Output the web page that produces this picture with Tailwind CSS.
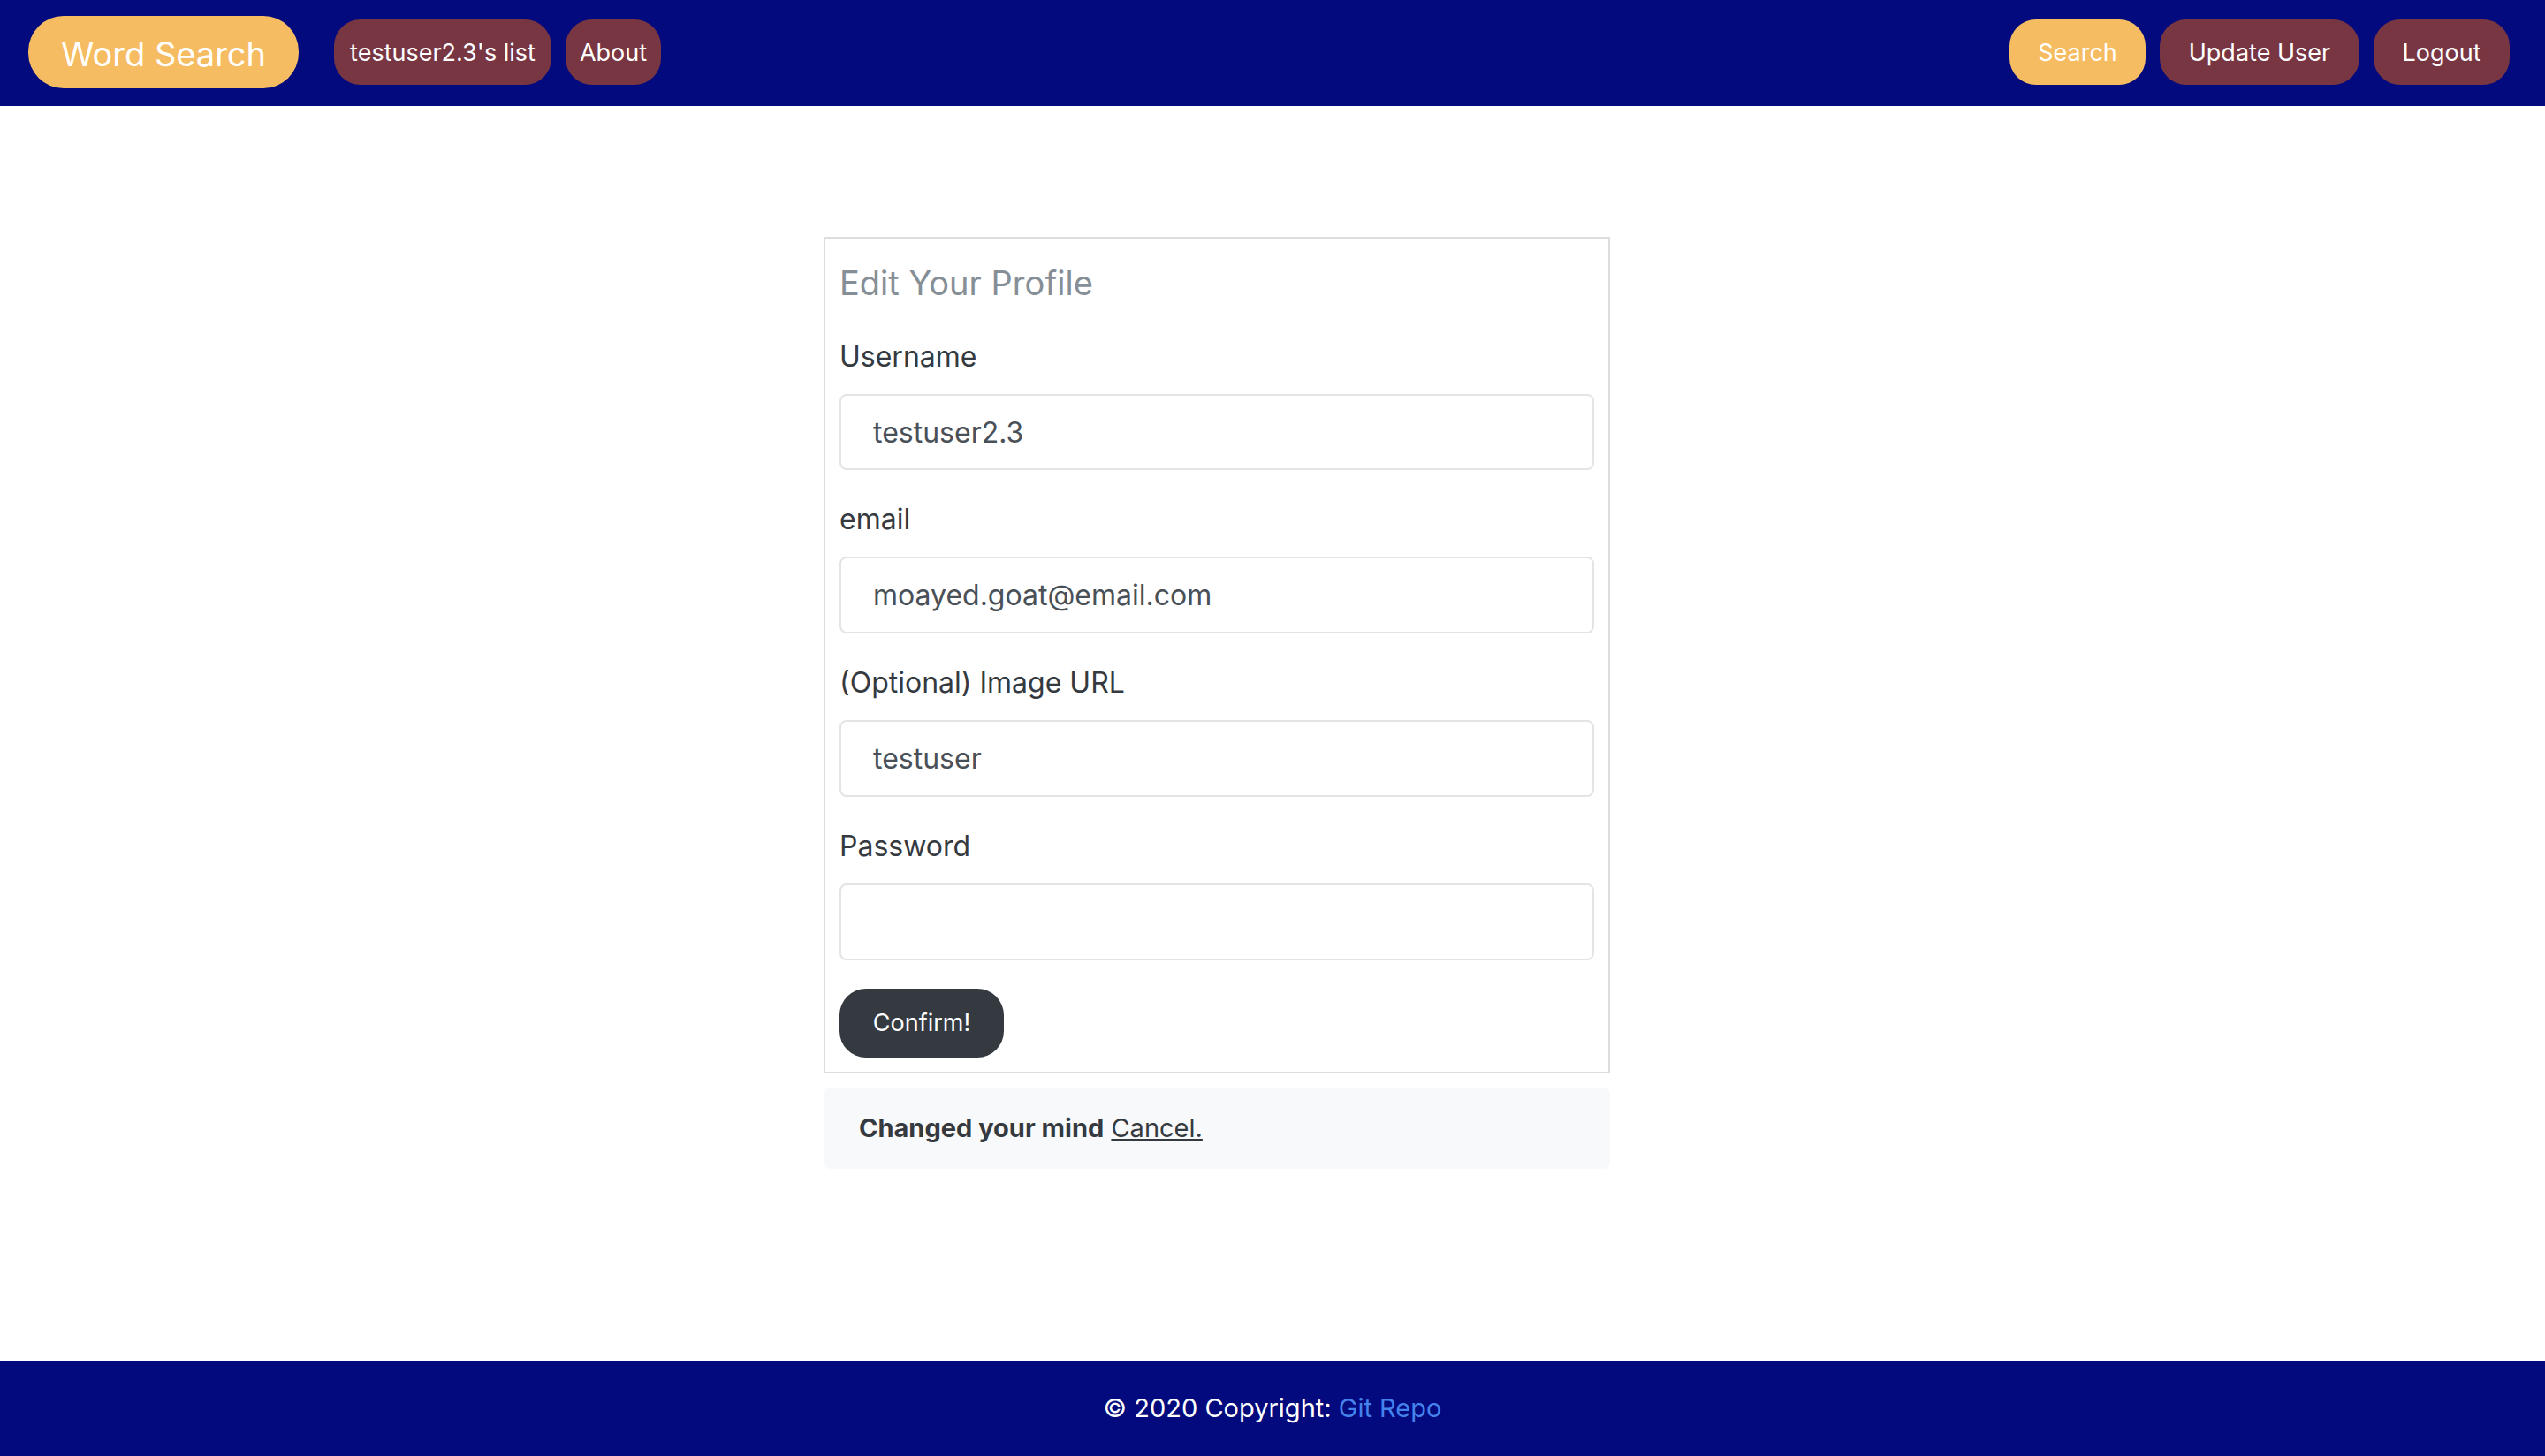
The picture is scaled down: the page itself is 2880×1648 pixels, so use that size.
<!DOCTYPE html>
<html lang="en">
<head>
<meta charset="utf-8">
<title>Word Search</title>
<script src="https://cdn.jsdelivr.net/npm/@tailwindcss/browser@4"></script>
</head>
<body class="flex min-h-screen flex-col bg-white font-['Inter',sans-serif] text-[#343a40]">
  <nav class="flex h-[120px] items-center justify-between bg-[#020a7d] pr-10 pb-0.5 pl-8 text-[27px] leading-[42px] text-white">
    <div class="flex items-center gap-4">
      <a href="#" class="mr-6 flex h-[82px] w-[306px] items-center justify-center rounded-[40px] bg-[#f6bc62] pt-1 text-[38px] whitespace-nowrap">Word Search</a>
      <a href="#" class="flex h-[74px] w-[246px] items-center justify-center rounded-[30px] bg-[#783542] pt-0.5 whitespace-nowrap">testuser2.3's list</a>
      <a href="#" class="flex h-[74px] w-[108px] items-center justify-center rounded-[30px] bg-[#783542] pt-0.5">About</a>
    </div>
    <div class="flex items-center gap-4">
      <a href="#" class="flex h-[74px] w-[154px] items-center justify-center rounded-[30px] bg-[#f6bc62] pt-0.5">Search</a>
      <a href="#" class="flex h-[74px] w-[226px] items-center justify-center rounded-[30px] bg-[#783542] pt-0.5 whitespace-nowrap">Update User</a>
      <a href="#" class="flex h-[74px] w-[154px] items-center justify-center rounded-[30px] bg-[#783542] pt-0.5">Logout</a>
    </div>
  </nav>

  <main class="grid flex-1 grid-cols-[932fr_890fr_1058fr] content-start pt-[148px]">
    <div class="col-start-2">
      <form class="border-2 border-[#dddddd] p-4">
        <h2 class="pt-2 text-[38px] leading-[52px] font-normal text-[#868e96]">Edit Your Profile</h2>
        <div class="mt-8 flex flex-col gap-[30px]">
          <div class="flex flex-col gap-4">
            <label for="username" class="text-[32px] leading-[52px]">Username</label>
            <input id="username" type="text" value="testuser2.3" class="h-[86px] w-full rounded-lg border-2 border-[#e4e4e4] px-9 text-[32px] text-[#495057]">
          </div>
          <div class="flex flex-col gap-4">
            <label for="email" class="text-[32px] leading-[52px]">email</label>
            <input id="email" type="email" value="moayed.goat@email.com" class="h-[87px] w-full rounded-lg border-2 border-[#e4e4e4] px-9 text-[32px] text-[#495057]">
          </div>
          <div class="flex flex-col gap-4">
            <label for="image" class="text-[32px] leading-[52px]">(Optional) Image URL</label>
            <input id="image" type="text" value="testuser" class="h-[87px] w-full rounded-lg border-2 border-[#e4e4e4] px-9 text-[32px] text-[#495057]">
          </div>
          <div class="flex flex-col gap-4">
            <label for="password" class="text-[32px] leading-[52px]">Password</label>
            <input id="password" type="password" class="h-[87px] w-full rounded-lg border-2 border-[#e4e4e4] px-9 text-[32px] text-[#495057]">
          </div>
        </div>
        <button type="submit" class="mt-8 block h-[78px] w-[186px] rounded-[30px] bg-[#343a40] text-[27px] text-white">Confirm!</button>
      </form>
      <p class="mt-4 rounded-lg bg-[#f8f9fa] px-10 py-6 text-[29px] leading-[44px]"><strong class="font-bold">Changed your mind</strong> <a href="#" class="underline">Cancel.</a></p>
    </div>
  </main>

  <footer class="flex h-[108px] items-center justify-center bg-[#020a7d] text-[29px] leading-[44px] text-white">
    <p>© 2020 Copyright: <a href="#" class="text-[#4582ec]">Git Repo</a></p>
  </footer>
</body>
</html>
